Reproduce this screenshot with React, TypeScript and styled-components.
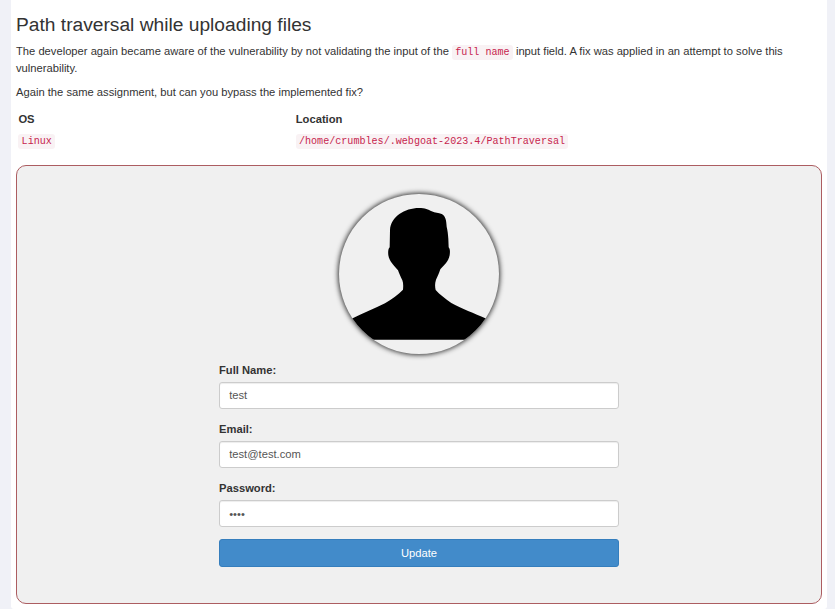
import React from "react";
import styled, { createGlobalStyle } from "styled-components";

const GlobalStyle = createGlobalStyle`
  *, *::before, *::after { box-sizing: border-box; }
  body {
    margin: 0;
    background: #f0f1f7;
    color: #333;
    font-family: "Liberation Sans", Arial, sans-serif;
    font-size: 11.2px;
    line-height: 17px;
    overflow: hidden;
  }
`;

const Panel = styled.main`
  height: 609px;
  margin: 0 8px 0 11px;
  padding: 14px 5px 0;
  background: #fff;
  border-radius: 0 0 3px 3px;
`;

const Title = styled.h3`
  margin: 0 0 7px;
  font-size: 19.2px;
  font-weight: 400;
  line-height: 22px;
`;

const Paragraph = styled.p`
  margin: 0 0 7px;
`;

const Code = styled.code`
  padding: 1.6px 3.2px;
  border-radius: 3px;
  background: #f9f2f4;
  color: #c7254e;
  font-family: "Liberation Mono", monospace;
  font-size: 10.08px;
  line-height: 10px;
`;

const Facts = styled.dl`
  display: grid;
  grid-template-columns: 277.4px 1fr;
  row-gap: 4px;
  margin: 10px 2px 16px 2.4px;
`;

const FactHead = styled.dt`
  font-weight: 700;
`;

const Fact = styled.dd`
  margin: 0;
`;

const Card = styled.section`
  display: flex;
  justify-content: center;
  height: 439px;
  padding-top: 28px;
  border: 1px solid #ac5d61;
  border-radius: 10px;
  background: #f0f0f0;
`;

const ProfileForm = styled.form`
  display: flex;
  flex-direction: column;
  width: 400px;
`;

const Avatar = styled.svg`
  align-self: center;
  width: 160px;
  height: 160px;
  margin-bottom: 8px;
  border-radius: 50%;
  box-shadow: 0 0 5px 1px #333;
`;

const Field = styled.div`
  display: flex;
  flex-direction: column;
  margin-bottom: 12px;
`;

const Label = styled.label`
  margin-bottom: 3px;
  font-weight: 700;
`;

const Input = styled.input`
  height: 27px;
  padding: 3px 9.2px 5px;
  border: 1px solid #ccc;
  border-radius: 3px;
  background: #fff;
  box-shadow: inset 0 1px 1px rgba(0, 0, 0, 0.075);
  color: #555;
  font: 11.2px/17px "Liberation Sans", Arial, sans-serif;

  &[type="password"] {
    padding: 4px 9.2px;
  }
`;

const UpdateButton = styled.button`
  height: 28px;
  padding: 0;
  border: 1px solid #357ebd;
  border-radius: 3px;
  background: #428bca;
  color: #fff;
  font: 11.2px/17px "Liberation Sans", Arial, sans-serif;
`;

export default function App() {
  return (
    <>
      <GlobalStyle />
      <Panel>
        <Title>Path traversal while uploading files</Title>
        <Paragraph>
          The developer again became aware of the vulnerability by not validating the input of the{" "}
          <Code>full name</Code> input field. A fix was applied in an attempt to solve this vulnerability.
        </Paragraph>
        <Paragraph>Again the same assignment, but can you bypass the implemented fix?</Paragraph>
        <Facts>
          <FactHead>OS</FactHead>
          <FactHead>Location</FactHead>
          <Fact><Code>Linux</Code></Fact>
          <Fact><Code>/home/crumbles/.webgoat-2023.4/PathTraversal</Code></Fact>
        </Facts>
        <Card>
          <ProfileForm>
            <Avatar viewBox="27 30 480 480" role="img" aria-label="Profile picture">
              <path d="M179 190 L180 138 C182 98 224 72 267 72 C285 72 295 77 305 82 C315 88 326 86 335 90 C346 96 349 107 350 128 C353 140 354 150 355 164 L356 190 C361 196 360 205 359 214 C355 234 342 243 331 256 C326 270 323 278 318 287 C314 299 315 309 317 318 C330 333 345 343 364 357 C393 373 435 389 466 403 L510 430 L510 467 L20 467 L20 425 L68 403 C98 388 135 373 165 358 C185 346 204 332 219 317 C220 305 220 297 217 289 C211 278 208 269 204 259 C192 245 178 233 175 214 C174 204 174 196 179 190 Z" />
            </Avatar>
            <Field>
              <Label htmlFor="name">Full Name:</Label>
              <Input id="name" type="text" defaultValue="test" />
            </Field>
            <Field>
              <Label htmlFor="email">Email:</Label>
              <Input id="email" type="email" defaultValue="test@test.com" />
            </Field>
            <Field>
              <Label htmlFor="password">Password:</Label>
              <Input id="password" type="password" defaultValue="test" />
            </Field>
            <UpdateButton type="button">Update</UpdateButton>
          </ProfileForm>
        </Card>
      </Panel>
    </>
  );
}
